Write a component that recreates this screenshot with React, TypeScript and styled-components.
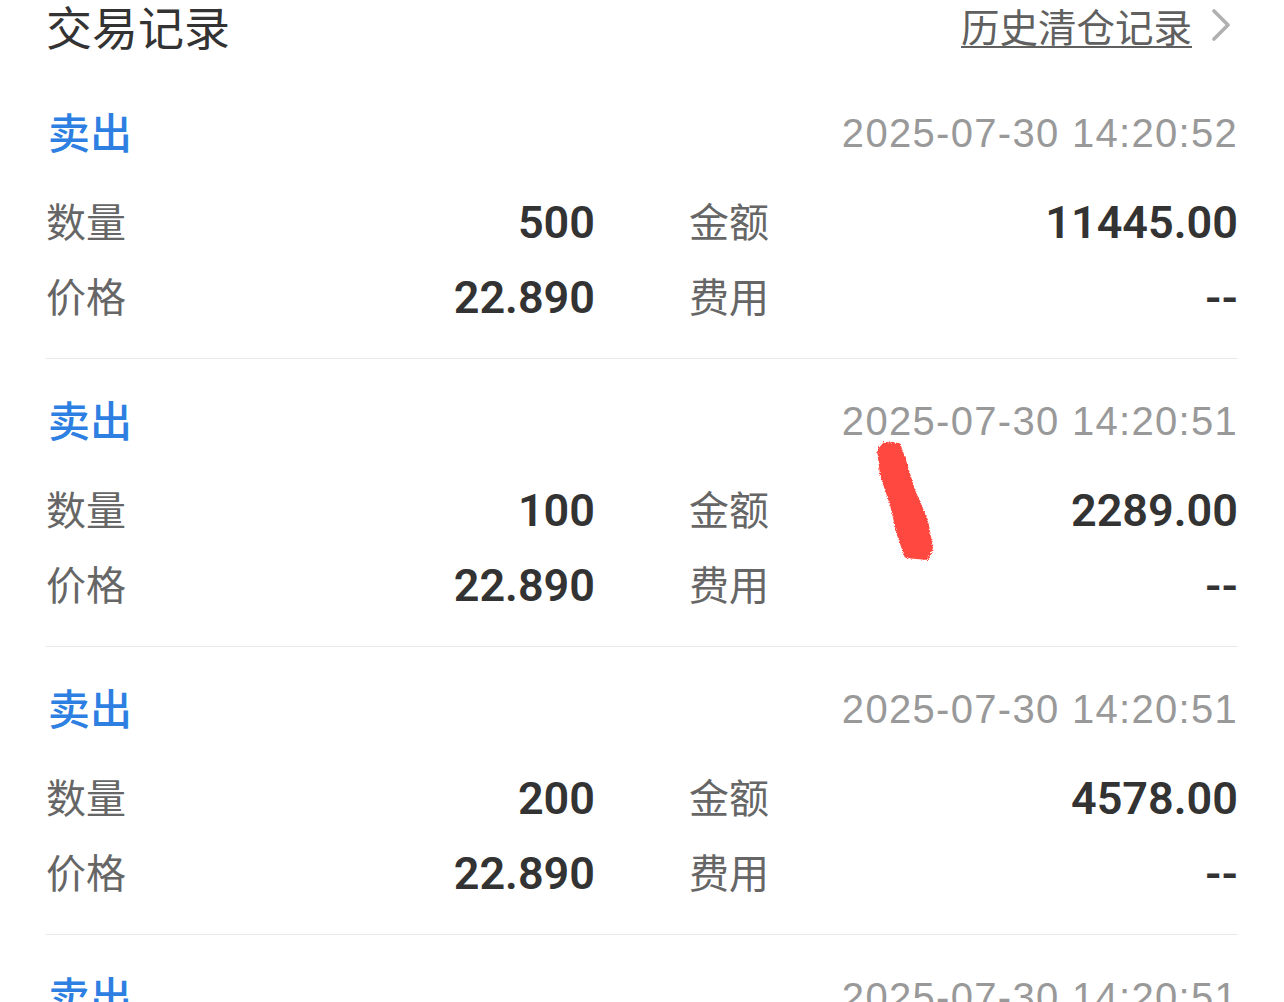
import React from "react";
import styled, { createGlobalStyle } from "styled-components";

const palette = {
  title: "#333333",
  label: "#666666",
  value: "#333333",
  date: "#999999",
  blue: "#2e7fe2",
  chevron: "#b0b0b0",
  divider: "#e9e9e9",
};

const cjk = `"Noto Sans CJK SC", "Noto Sans", sans-serif`;
const num = `"Liberation Sans", Arial, "Noto Sans CJK SC", sans-serif`;
const figure = `Roboto, "Liberation Sans", Arial, sans-serif`;

const GlobalStyle = createGlobalStyle`
  html, body {
    margin: 0;
    padding: 0;
    background: #ffffff;
    overflow: hidden;
  }
  body {
    font-family: ${cjk};
  }
`;

const Page = styled.div`
  position: relative;
  width: 1284px;
  height: 1002px;
  overflow: hidden;
  padding: 0 46px 0 46px;
  box-sizing: border-box;
`;

const HeaderRow = styled.div`
  display: flex;
  justify-content: space-between;
  align-items: center;
  height: 50px;
  margin-bottom: 21px;
`;

const Title = styled.div`
  font-family: ${cjk};
  font-size: 46px;
  line-height: 50px;
  color: ${palette.title};
`;

const HistoryLink = styled.a`
  display: flex;
  align-items: center;
  gap: 19px;
  color: #606060;
  text-decoration: none;
  margin-right: 7px;
`;

const HistoryText = styled.span`
  font-family: ${cjk};
  font-size: 38.5px;
  line-height: 50px;
  text-decoration: underline;
  text-decoration-thickness: 2px;
  text-underline-offset: 4px;
`;

const Record = styled.div`
  padding: 29px 0 26px;
  border-bottom: 1px solid ${palette.divider};
`;

const RecordHead = styled.div`
  display: flex;
  justify-content: space-between;
  align-items: center;
  height: 60px;
  margin-bottom: 22px;
`;

const Side = styled.span`
  font-family: ${cjk};
  font-size: 42px;
  font-weight: 500;
  color: ${palette.blue};
  margin-left: 2px;
`;

const DateText = styled.span`
  font-family: ${num};
  font-size: 40px;
  letter-spacing: 1.3px;
  color: ${palette.date};
  margin-top: 6px;
`;

const Grid = styled.div`
  display: grid;
  grid-template-columns: 1fr 1fr;
  column-gap: 94px;
`;

const Cell = styled.div`
  display: flex;
  justify-content: space-between;
  align-items: center;
  height: 75px;
`;

const Label = styled.span`
  font-family: ${cjk};
  font-size: 40px;
  color: ${palette.label};
`;

const Value = styled.span`
  font-family: ${figure};
  font-size: 45px;
  font-weight: 600;
  color: ${palette.value};
  margin-top: 6px;
`;

const Scribble = styled.svg`
  position: absolute;
  left: 872px;
  top: 438px;
  pointer-events: none;
`;

type Trade = {
  time: string;
  qty: string;
  amount: string;
  price: string;
  fee: string;
};

const trades: Trade[] = [
  { time: "2025-07-30 14:20:52", qty: "500", amount: "11445.00", price: "22.890", fee: "--" },
  { time: "2025-07-30 14:20:51", qty: "100", amount: "2289.00", price: "22.890", fee: "--" },
  { time: "2025-07-30 14:20:51", qty: "200", amount: "4578.00", price: "22.890", fee: "--" },
  { time: "2025-07-30 14:20:51", qty: "100", amount: "2289.00", price: "22.890", fee: "--" },
];

const Chevron = () => (
  <svg width="20" height="32" viewBox="0 0 20 32">
    <polyline
      points="3,2 17,16 3,30"
      fill="none"
      stroke={palette.chevron}
      strokeWidth="3.6"
      strokeLinecap="round"
      strokeLinejoin="round"
    />
  </svg>
);

const TradeRecord = ({ trade }: { trade: Trade }) => (
  <Record>
    <RecordHead>
      <Side>卖出</Side>
      <DateText>{trade.time}</DateText>
    </RecordHead>
    <Grid>
      <Cell>
        <Label>数量</Label>
        <Value>{trade.qty}</Value>
      </Cell>
      <Cell>
        <Label>金额</Label>
        <Value>{trade.amount}</Value>
      </Cell>
      <Cell>
        <Label>价格</Label>
        <Value>{trade.price}</Value>
      </Cell>
      <Cell>
        <Label>费用</Label>
        <Value>{trade.fee}</Value>
      </Cell>
    </Grid>
  </Record>
);

export default function App() {
  return (
    <>
      <GlobalStyle />
      <Page>
        <HeaderRow>
          <Title>交易记录</Title>
          <HistoryLink href="#">
            <HistoryText>历史清仓记录</HistoryText>
            <Chevron />
          </HistoryLink>
        </HeaderRow>
        {trades.map((t, i) => (
          <TradeRecord key={i} trade={t} />
        ))}
        {/* red marker scribble over the second record */}
        <Scribble width="72" height="132" viewBox="0 0 72 132">
          <defs>
            <filter id="rough" x="-20%" y="-20%" width="140%" height="140%">
              <feTurbulence type="fractalNoise" baseFrequency="0.9" numOctaves="2" result="n" />
              <feDisplacementMap in="SourceGraphic" in2="n" scale="5" />
            </filter>
          </defs>
          <path
            d="M5,12 L12,4 L28,5 L34,22 L43,52 L56,82 L61,110 L56,122 L33,120 L25,97 L18,67 L8,37 Z"
            fill="#ff3b30"
            opacity="0.93"
            filter="url(#rough)"
          />
        </Scribble>
      </Page>
    </>
  );
}
